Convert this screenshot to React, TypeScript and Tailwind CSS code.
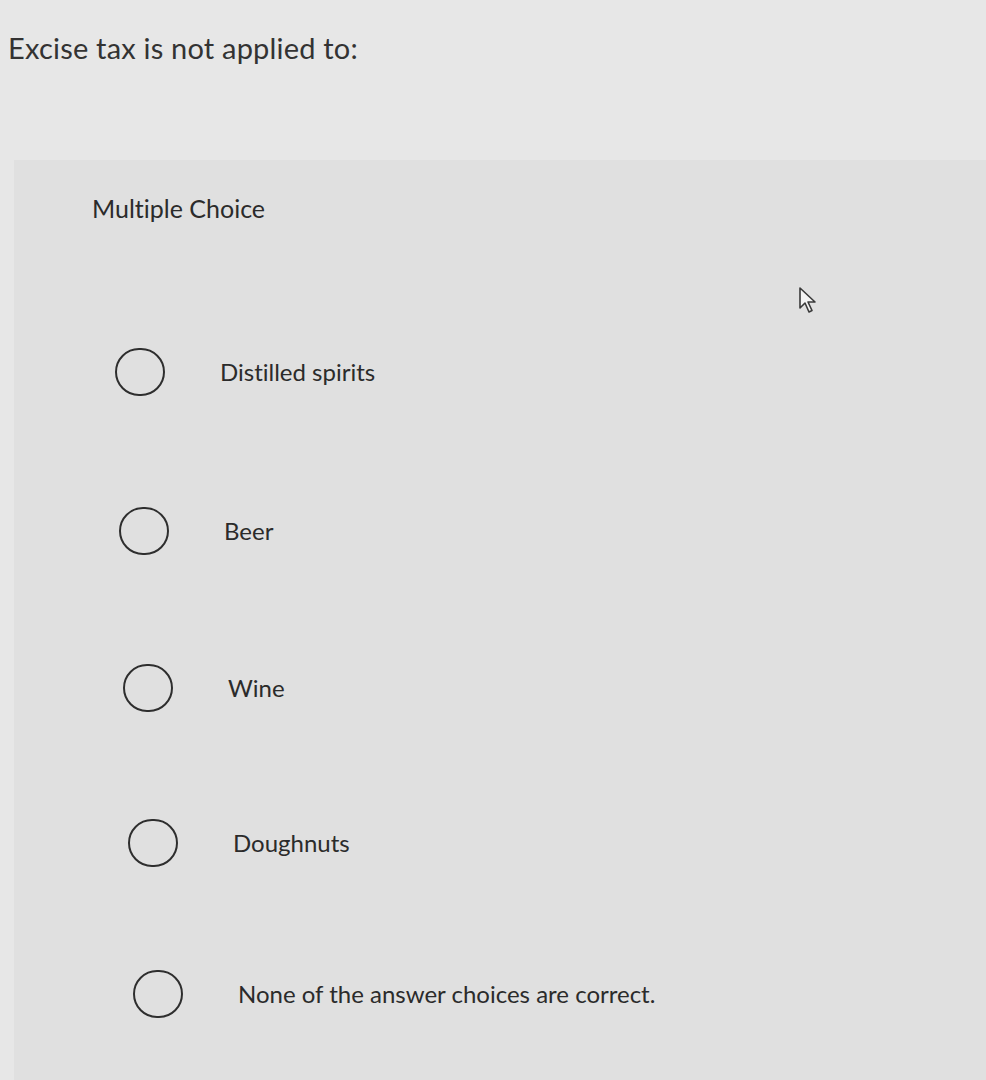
const options = [
  { label: "Distilled spirits", row: "h-[158px] pl-[101px]" },
  { label: "Beer", row: "h-[160px] pl-[105px]" },
  { label: "Wine", row: "h-[154px] pl-[109px]" },
  { label: "Doughnuts", row: "h-[156px] pl-[114px]" },
  { label: "None of the answer choices are correct.", row: "h-[146px] pl-[119px]" },
];

function Cursor() {
  return (
    <svg className="absolute left-[798px] top-[286px]" width="22" height="30" viewBox="0 0 22 30">
      <path d="M2 2 L2 22 L7 17 L11 26 L14 24.5 L10 16 L17 16 Z" fill="#f4f4f4" stroke="#3a3a3a" strokeWidth="1.6" strokeLinejoin="round" />
    </svg>
  );
}

export default function App() {
  return (
    <div className="relative h-[1080px] w-[986px] overflow-hidden bg-[#e7e7e7] font-['Lato','Liberation_Sans',sans-serif] text-[#2b2b2b] [font-variant-ligatures:none]">
      {/* Question */}
      <div className="h-[160px] pl-[8px] pt-[28px]">
        <h1 className="text-[29px] leading-[40px] tracking-[0.2px] text-[#333]">Excise tax is not applied to:</h1>
      </div>

      {/* Answer panel */}
      <div className="ml-[14px] h-[920px] bg-[#e0e0e0]">
        <div className="h-[133px] pl-[78px] pt-[32px]">
          <p className="text-[25px] leading-[32px]">Multiple Choice</p>
        </div>
        <ul className="flex flex-col">
          {options.map((o) => (
            <li key={o.label} className={`flex items-center gap-[55px] ${o.row}`}>
              <span className="h-[48px] w-[50px] shrink-0 rounded-full border-2 border-[#2e2e2e]" />
              <span className="text-[24px] leading-[30px]">{o.label}</span>
            </li>
          ))}
        </ul>
      </div>

      <Cursor />
    </div>
  );
}
